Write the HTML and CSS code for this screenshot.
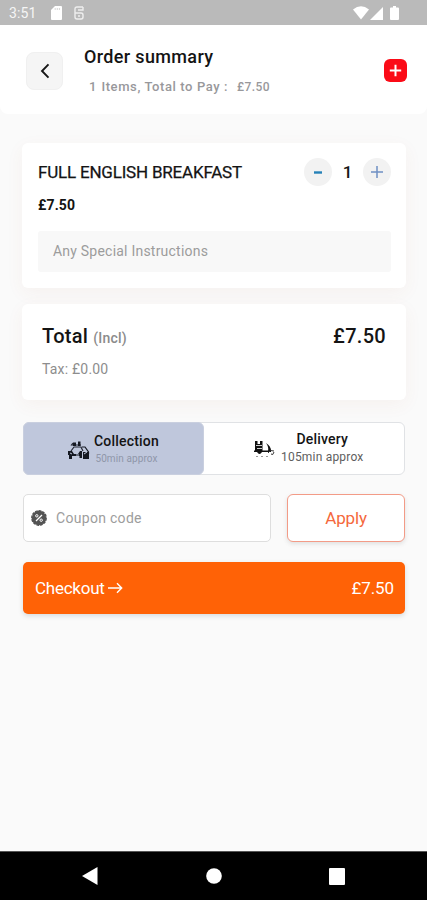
FILE: index.html
```html
<!DOCTYPE html>
<html lang="en">
<head>
<meta charset="utf-8">
<title>Order summary</title>
<link rel="stylesheet" href="styles.css">
</head>
<body>
<div class="statusbar">
  <span class="clock">3:51</span>
  <svg class="sd" width="11" height="14" viewBox="0 0 11 14"><path d="M4 0h6q1 0 1 1v12q0 1-1 1H1q-1 0-1-1V4z" fill="#fff"/><path d="M4.2 2v2M6.3 2v2M8.4 2v2" stroke="#ccc" stroke-width=".8"/></svg>
  <svg class="sim" width="10" height="14" viewBox="0 0 10 14" fill="none" stroke="#eee" stroke-width="1.4"><path d="M9 1H3Q1 1 1 3v8q0 2 2 2h4q2 0 2-2V9q0-2-2-2H1M4 4h5V1M4 10h2"/></svg>
  <svg class="wifi" width="16" height="14" viewBox="0 0 16 14"><path d="M0 3.5Q8-2.8 16 3.5L8 13.5z" fill="#fff"/></svg>
  <svg class="signal" width="13" height="13" viewBox="0 0 13 13"><path d="M13 0v13H0z" fill="#fff"/></svg>
  <svg class="battery" width="9" height="14" viewBox="0 0 9 14"><path d="M3 0h3v1.5h2q1 0 1 1V13q0 1-1 1H1q-1 0-1-1V2.500q0-1 1-1h2z" fill="#fff"/></svg>
</div>
<header class="header">
  <div class="back"><svg width="10" height="16" viewBox="0 0 10 16" fill="none" stroke="#161616" stroke-width="1.9"><path d="M8.500 1.300 2 8l6.500 6.700"/></svg></div>
  <div class="heading">
    <h1 class="title">Order summary</h1>
    <p class="subtitle"><span class="count">1</span><span class="items">Items, Total to Pay :</span><span class="pay">£7.50</span></p>
  </div>
  <svg class="add" width="23" height="23" viewBox="0 0 23 23"><rect width="23" height="23" rx="6" fill="#fb0b17"/><path d="M11.500 5.800v11.400M5.800 11.500h11.400" stroke="#fff" stroke-width="2"/></svg>
</header>
<main class="main">
  <section class="card item">
    <div class="item-row">
      <span class="item-name">FULL ENGLISH BREAKFAST</span>
      <div class="stepper">
        <span class="round"><svg width="10" height="4" viewBox="0 0 10 4"><path d="M1 2.500h8" stroke="#2581b8" stroke-width="2.400"/></svg></span>
        <span class="qty">1</span>
        <span class="round"><svg width="14" height="14" viewBox="0 0 14 14"><path d="M7 1v12M1 7h12" stroke="#6f90c4" stroke-width="1.500"/></svg></span>
      </div>
    </div>
    <div class="item-price">£7.50</div>
    <div class="notes">Any Special Instructions</div>
  </section>
  <section class="card total">
    <div class="total-row"><span class="total-label">Total</span><span class="incl">(Incl)</span><span class="total-price">£7.50</span></div>
    <div class="tax">Tax: £0.00</div>
  </section>
  <div class="modes">
    <div class="mode collection">
      <svg class="mode-icon" width="22" height="19" viewBox="0 0 22 19"><path d="M3 4.500 5 2M4 4h9M3 10l3-4h7l2 4" fill="none" stroke="#222632" stroke-width="1.200"/><path d="M5 1.500h3V5H5zM10 .5h2.500V5H10zM0 10h4l2 3h4l2-3h2v7h-2.500v-2H4v3H1v-4H0zM15 11h6v7h-6z" fill="#151922"/><path d="M14 6h3l3.500 5v2" fill="none" stroke="#151922" stroke-width="1.200"/><path d="m16 13 3-2M2 12l2 1M8 14h3" stroke="#bfc7dc" stroke-width="1"/></svg>
      <div class="mode-text"><div class="mode-name">Collection</div><div class="mode-time">50min approx</div></div>
    </div>
    <div class="mode delivery">
      <svg class="mode-icon" width="21" height="18" viewBox="0 0 21 18"><path d="M1 1h2.500v3H6V1h2.500v10H1z" fill="#111"/><path d="M2 5.500h6M3 8.500h5" stroke="#fff" stroke-width=".8" fill="none"/><path d="M12 3q5 3 5 8h-3q1-4-2-8zM0 10.500h17V12H0zM3 12h5q-2.500 4-5 0z" fill="#111"/><path d="M14 13q2-4 6-2M17 14q2 2 3-2" fill="none" stroke="#333"/><path d="M2 16.500h15" stroke="#999" stroke-dasharray="2 3"/></svg>
      <div class="mode-text"><div class="mode-name">Delivery</div><div class="mode-time">105min approx</div></div>
    </div>
  </div>
  <div class="coupon-row">
    <div class="coupon">
      <svg width="16" height="16" viewBox="0 0 16 16"><circle cx="8" cy="8" r="7.200" fill="#535353" stroke="#535353" stroke-width="1.400" stroke-dasharray="2.800 .9"/><path d="m5 11 6-6" stroke="#fff" stroke-width="1.300"/><circle cx="5.800" cy="5.800" r="1.200" fill="none" stroke="#fff"/><circle cx="10.200" cy="10.200" r="1.200" fill="none" stroke="#fff"/></svg>
      <span class="coupon-text">Coupon code</span>
    </div>
    <div class="apply">Apply</div>
  </div>
  <div class="checkout">
    <span class="checkout-label">Checkout</span>
    <svg class="arrow" width="15" height="12" viewBox="0 0 15 12" fill="none" stroke="#fff" stroke-width="1.400"><path d="M0 6h13.500M9 1.300 13.700 6 9 10.700"/></svg>
    <span class="checkout-price">£7.50</span>
  </div>
</main>
<nav class="navbar">
  <svg class="nav-icon" width="16" height="18" viewBox="0 0 16 18"><path d="M0 9 15.500 0v18z" fill="#fff"/></svg>
  <svg class="nav-icon" width="16" height="16" viewBox="0 0 16 16"><circle cx="8" cy="8" r="7.800" fill="#fff"/></svg>
  <svg class="nav-icon" width="16" height="17" viewBox="0 0 16 17"><rect width="16" height="17" rx="1" fill="#fff"/></svg>
</nav>
</body>
</html>
```
FILE: styles.css
```css
* { box-sizing: border-box; }
body {
  margin: 0;
  width: 427px;
  height: 900px;
  overflow: hidden;
  display: flex;
  flex-direction: column;
  background: #fafafa;
  color: #141414;
  font-family: Roboto, sans-serif;
  white-space: nowrap;
}
svg { display: block; flex: none; }
.statusbar { height: 25px; flex: none; display: flex; align-items: center; padding: 1px 28px 0 9px; background: #bababa; }
.clock { width: 42px; color: #f5f5f5; font-size: 14px; line-height: 18px; letter-spacing: .1px; }
.sim { margin-left: 12px; }
.wifi { margin-left: auto; margin-right: 1px; }
.battery { margin-left: 7px; }
.header { height: 89px; flex: none; display: flex; padding: 0 20px 0 26px; background: #fff; border-radius: 0 0 8px 8px; }
.back { width: 37px; height: 38px; margin-top: 27px; display: flex; align-items: center; justify-content: center; background: #f5f5f5; border: 1px solid #f0f0f0; border-radius: 8px; }
.heading { margin-left: 20px; padding-top: 20px; flex: 1; }
.title { margin: 0 0 0 1px; font-size: 18px; font-weight: 500; line-height: 24px; letter-spacing: .35px; }
.subtitle { margin: 9px 0 0 6px; display: flex; font-size: 13px; line-height: 18px; font-weight: 500; color: #98989b; }
.items { margin-left: 5px; letter-spacing: .6px; }
.pay { margin-left: 9px; font-size: 12px; line-height: 19px; letter-spacing: .4px; }
.add { margin-top: 34px; }
.main { flex: 1; padding: 29px 21px 0 22px; }
.card { background: #fff; border-radius: 6px; box-shadow: 0 5px 18px rgba(190, 90, 50, .055); }
.item { height: 145px; padding: 15px 15px 0 16px; }
.item-row { display: flex; align-items: center; justify-content: space-between; height: 28px; }
.item-name { font-size: 17px; letter-spacing: -.2px; -webkit-text-stroke: .25px #141414; }
.stepper { display: flex; align-items: center; }
.round { width: 28px; height: 28px; border-radius: 50%; background: #f2f2f2; display: flex; align-items: center; justify-content: center; }
.qty { width: 31px; text-align: center; font-size: 17px; font-weight: 500; }
.item-price { margin-top: 9px; font-size: 14px; font-weight: 700; line-height: 20px; letter-spacing: .15px; }
.notes { height: 41px; margin-top: 16px; padding-left: 15px; background: #f8f8f8; border-radius: 3px; color: #9c9c9c; font-size: 14px; line-height: 41px; letter-spacing: .22px; }
.total { height: 96px; margin-top: 16px; padding: 18px 20px 0; }
.total-row { display: flex; align-items: baseline; line-height: 28px; }
.total-label { font-size: 20px; font-weight: 500; letter-spacing: .3px; }
.incl { margin-left: 5px; font-size: 14px; font-weight: 500; letter-spacing: .2px; color: #8b8b8b; }
.total-price { margin-left: auto; font-size: 20px; font-weight: 500; letter-spacing: .3px; }
.tax { margin-top: 8px; color: #8d8d8d; font-size: 14px; line-height: 18px; letter-spacing: .2px; }
.modes { width: 382px; height: 53px; margin: 22px 0 0 1px; display: flex; background: #fff; border: 1px solid #e0e2e5; border-radius: 6px; }
.mode { display: flex; align-items: center; }
.collection { width: 181px; margin: -1px 0 -1px -1px; padding-left: 44px; background: #bfc7dc; border: 1px solid #c9cfdf; border-radius: 6px; }
.mode-icon { margin-right: 4px; }
.collection .mode-icon { margin-top: 3px; }
.collection .mode-text { padding-top: 3px; }
.mode-text { text-align: center; }
.mode-name { font-size: 14px; font-weight: 500; line-height: 18px; letter-spacing: .2px; }
.mode-time { font-size: 12px; line-height: 18px; letter-spacing: .2px; color: #5e5e5e; }
.collection .mode-time { font-size: 10px; letter-spacing: .1px; color: #8f96a9; }
.delivery { flex: 1; padding-left: 50px; }
.delivery .mode-icon { margin-right: 6px; }
.delivery .mode-name { margin-top: -1px; }
.coupon-row { display: flex; justify-content: space-between; width: 382px; margin: 19px 0 0 1px; }
.coupon { width: 248px; height: 48px; display: flex; align-items: center; padding-left: 7px; background: #fff; border: 1px solid #dedede; border-radius: 5px; }
.coupon-text { margin-left: 9px; color: #9d9d9d; font-size: 14px; letter-spacing: .3px; }
.apply { width: 118px; height: 48px; background: #fff; border: 1px solid #f39b87; border-radius: 6px; box-shadow: 0 2px 4px rgba(80, 80, 80, .15); color: #f5683c; font-size: 17px; line-height: 46px; letter-spacing: -.15px; text-align: center; }
.checkout { width: 382px; height: 52px; margin: 20px 0 0 1px; padding: 0 11px 0 12px; display: flex; align-items: center; background: #ff6206; border-radius: 5px; box-shadow: 0 2px 5px rgba(80, 100, 110, .2); color: #fff; font-size: 17px; }
.checkout-label { letter-spacing: -.25px; }
.arrow { margin-left: 3px; }
.checkout-price { margin-left: auto; letter-spacing: -.1px; }
.navbar { height: 49px; flex: none; display: flex; align-items: center; justify-content: space-between; padding: 0 82px; background: #000; border-top: 1px solid #555; }
```
